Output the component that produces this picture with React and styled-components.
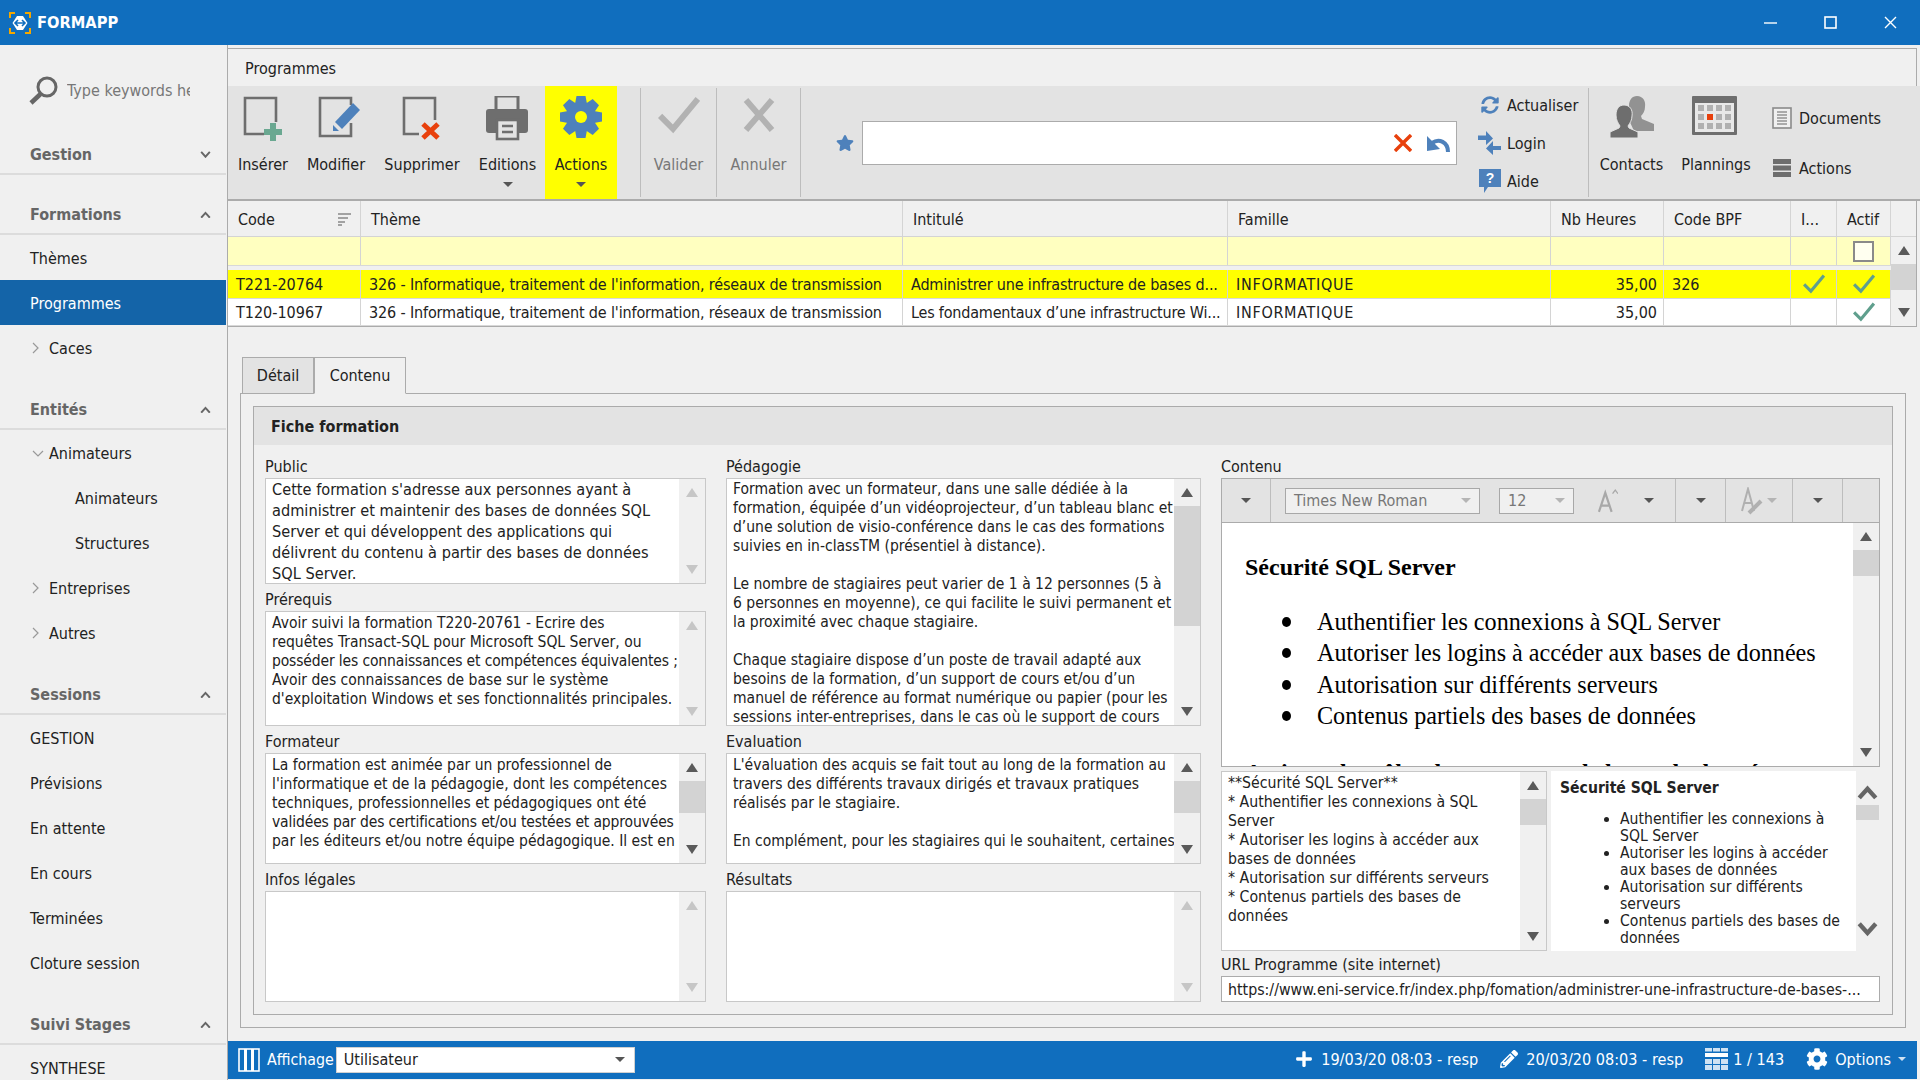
import styled, { createGlobalStyle } from 'styled-components';
import { FaStar, FaSyncAlt, FaPlus, FaPencilAlt, FaCog } from 'react-icons/fa';

const GlobalStyle = createGlobalStyle`
  html, body {
    margin: 0;
    padding: 0;
    background: #f0f0f0;
  }
  * {
    box-sizing: border-box;
  }
`;

const UI_FONT = `"DejaVu Sans Condensed", "DejaVu Sans", sans-serif`;
const BLUE = '#106ebe';
const ICON_BLUE = '#4e81bb';
const ICON_GRAY = '#6e6e6e';
const ICON_RED = '#e8400c';
const ICON_GREEN = '#6aa891';
const LINE = '#ababab';

const Window = styled.div`
  width: 1920px;
  height: 1080px;
  overflow: hidden;
  display: flex;
  flex-direction: column;
  background: #f0f0f0;
  color: #222;
  font-family: ${UI_FONT};
  font-stretch: condensed;
  font-size: 16px;
`;

const TitleBar = styled.header`
  height: 45px;
  flex: none;
  display: flex;
  align-items: center;
  padding-left: 9px;
  background: ${BLUE};
  color: #fff;
`;

const AppName = styled.span`
  margin-left: 6px;
  font-weight: 700;
  font-size: 16.3px;
`;

const WinButtons = styled.div`
  margin-left: auto;
  display: flex;
`;

const WinButton = styled.div`
  width: 60px;
  height: 45px;
  display: flex;
  align-items: center;
  justify-content: center;
`;

const Body = styled.div`
  flex: 1;
  min-height: 0;
  display: flex;
`;

/* sidebar */
const Sidebar = styled.nav`
  width: 228px;
  flex: none;
  border-right: 1px solid ${LINE};
  overflow: hidden;
`;

const SearchRow = styled.div`
  height: 90px;
  display: flex;
  align-items: center;
  padding-left: 29px;
  color: #777;
`;

const SearchText = styled.span`
  width: 123px;
  margin-left: 9px;
  overflow: hidden;
  white-space: nowrap;
`;

const SectionHeader = styled.div`
  height: 40px;
  display: flex;
  align-items: center;
  justify-content: space-between;
  padding: 1px 15px 0 30px;
  margin-right: 1px;
  border-bottom: 2px solid #dcdcdc;
  font-weight: 700;
  color: #666;
`;

const SectionGap = styled.div`
  height: 20px;
`;

const NavItem = styled.div`
  height: 45px;
  display: flex;
  align-items: center;
  margin-right: 1px;
  padding-top: 1px;
  padding-left: ${(p) => p.$indent || 30}px;
  background: ${(p) => (p.$active ? '#1464a8' : 'transparent')};
  color: ${(p) => (p.$active ? '#fff' : '#222')};
`;

const TreeMark = styled.span`
  width: 17px;
  margin-left: 2px;
  display: flex;
  align-items: center;
`;

/* main */
const Main = styled.main`
  flex: 1;
  min-width: 0;
  display: flex;
  flex-direction: column;
  padding-top: 3px;
`;

const PanelTitle = styled.div`
  height: 38px;
  flex: none;
  display: flex;
  align-items: center;
  margin-right: 3px;
  padding: 1px 0 0 17px;
  border-top: 1px solid ${LINE};
  border-right: 1px solid ${LINE};
`;

const Toolbar = styled.div`
  height: 115px;
  flex: none;
  display: flex;
  background: #e3e3e3;
  border-bottom: 2px solid ${LINE};
`;

const ToolButton = styled.div`
  width: ${(p) => p.$w}px;
  flex: none;
  display: flex;
  flex-direction: column;
  align-items: center;
  padding-top: 10px;
  background: ${(p) => (p.$active ? '#ffff00' : 'transparent')};
  color: ${(p) => (p.$disabled ? '#777' : '#222')};
`;

const ToolIcon = styled.div`
  height: 46px;
  width: 100%;
  display: flex;
  align-items: flex-start;
  justify-content: center;
  padding-left: ${(p) => (p.$shift > 0 ? p.$shift : 0)}px;
  padding-right: ${(p) => (p.$shift < 0 ? -p.$shift : 0)}px;
`;

const ToolLabel = styled.div`
  margin-top: 12px;
  line-height: 22px;
  white-space: nowrap;
`;

const Caret = styled.span`
  display: block;
  width: 0;
  height: 0;
  border-left: ${(p) => p.$size || 5}px solid transparent;
  border-right: ${(p) => p.$size || 5}px solid transparent;
  border-top: ${(p) => p.$size || 5}px solid ${(p) => p.$color || '#555'};
`;

const ToolCaret = styled(Caret)`
  margin-top: 6px;
`;

const ToolSep = styled.div`
  width: 1px;
  flex: none;
  margin: 2px 0 2px ${(p) => p.$left || 0}px;
  background: #bdbdbd;
`;

const FilterGroup = styled.div`
  display: flex;
  align-items: center;
  margin-left: 35px;
  height: 100%;
`;

const FilterInput = styled.div`
  width: 595px;
  height: 44px;
  margin-left: 8px;
  display: flex;
  align-items: center;
  justify-content: flex-end;
  padding-right: 6px;
  gap: 14px;
  background: #fff;
  border: 1px solid ${LINE};
`;

const LinkColumn = styled.div`
  width: ${(p) => p.$w}px;
  flex: none;
  margin-left: ${(p) => p.$left || 0}px;
  display: flex;
  flex-direction: column;
  gap: ${(p) => p.$gap}px;
  padding-top: ${(p) => p.$top}px;
`;

const LinkRow = styled.div`
  height: 22px;
  display: flex;
  align-items: center;
  gap: 8px;
  white-space: nowrap;
`;

const LinkIcon = styled.span`
  width: 19px;
  display: flex;
  justify-content: center;
  color: ${ICON_BLUE};

  svg {
    flex: none;
  }
`;

/* table */
const Table = styled.section`
  flex: none;
  margin-right: 3px;
  border-bottom: 1px solid ${LINE};
  display: flex;
  border-right: 1px solid ${LINE};
`;

const TableMain = styled.div`
  width: 1663px;
  flex: none;
`;

const HeadRow = styled.div`
  display: flex;
  height: 36px;
  border-bottom: 1px solid #d4d4d4;
`;

const HeadCell = styled.div`
  width: ${(p) => p.$w}px;
  flex: none;
  display: flex;
  align-items: center;
  justify-content: space-between;
  padding: 1px 9px 0 10px;
  border-right: 1px solid #d4d4d4;
  white-space: nowrap;
  overflow: hidden;
`;

const DataRow = styled.div`
  display: flex;
  height: ${(p) => p.$h}px;
  background: ${(p) => p.$bg};
  border-bottom: 1px solid #d8d8d8;
  margin-bottom: ${(p) => p.$gap || 0}px;
`;

const Cell = styled.div`
  width: ${(p) => p.$w}px;
  flex: none;
  display: flex;
  align-items: center;
  justify-content: ${(p) => (p.$center ? 'center' : p.$right ? 'flex-end' : 'flex-start')};
  padding: ${(p) => (p.$right ? '1px 6px 0 0' : p.$center ? '0' : '1px 0 0 8px')};
  border-right: 1px solid #d4d4d4;
  letter-spacing: ${(p) => p.$track || 0}px;
  white-space: nowrap;
  overflow: hidden;
`;

const CheckBox = styled.span`
  width: 21px;
  height: 21px;
  background: #fffff0;
  border: 2px solid #8a8a8a;
`;

const HeadCorner = styled.div`
  height: 36px;
  border-bottom: 1px solid #d4d4d4;
`;

const Scroll = styled.div`
  width: ${(p) => p.$w || 26}px;
  flex: none;
  display: flex;
  flex-direction: column;
  align-items: stretch;
  background: #f0f0f0;
`;

const ScrollEnd = styled.div`
  height: 27px;
  flex: none;
  display: flex;
  align-items: center;
  justify-content: center;
`;

const ScrollThumb = styled.div`
  height: ${(p) => p.$h}px;
  flex: none;
  background: #d3d3d3;
`;

const ScrollFill = styled.div`
  flex: 1;
`;

const ArrowUp = styled.span`
  width: 0;
  height: 0;
  border-left: 6px solid transparent;
  border-right: 6px solid transparent;
  border-bottom: 9px solid ${(p) => (p.$off ? '#c6c6c6' : '#5a5a5a')};
`;

const ArrowDown = styled(ArrowUp)`
  border-bottom: 0;
  border-top: 9px solid ${(p) => (p.$off ? '#c6c6c6' : '#5a5a5a')};
`;

/* tabs */
const Content = styled.div`
  flex: none;
  margin: 30px 14px 0 12px;
`;

const Tabs = styled.div`
  display: flex;
  height: 36px;
  padding-left: 2px;
`;

const Tab = styled.div`
  width: ${(p) => p.$w}px;
  display: flex;
  align-items: center;
  justify-content: center;
  background: ${(p) => (p.$active ? '#f0f0f0' : '#e3e3e3')};
  border: 1px solid ${LINE};
  border-bottom: ${(p) => (p.$active ? '1px solid #f0f0f0' : `1px solid ${LINE}`)};
  margin-bottom: -1px;
  position: relative;
  z-index: 1;
`;

const TabPane = styled.div`
  height: 635px;
  padding: 12px;
  border: 1px solid ${LINE};
`;

const Group = styled.div`
  height: 609px;
  border: 1px solid ${LINE};
`;

const GroupHead = styled.div`
  height: 38px;
  display: flex;
  align-items: center;
  padding-left: 17px;
  background: #e3e3e3;
  font-weight: 700;
`;

const GroupBody = styled.div`
  display: grid;
  grid-template-columns: 441px 475px 659px;
  column-gap: 20px;
  padding: 13px 11px 0 11px;
`;

const FieldColumn = styled.div`
  display: flex;
  flex-direction: column;
  gap: 7px;
`;

const Field = styled.div`
  display: flex;
  flex-direction: column;
`;

const FieldLabel = styled.label`
  height: 20px;
  line-height: 18px;
  flex: none;
  white-space: nowrap;
`;

const TextBox = styled.div`
  height: ${(p) => p.$h}px;
  display: flex;
  background: #fff;
  border: 1px solid #c8c8c8;
  overflow: hidden;
`;

const TextArea = styled.div`
  flex: 1;
  min-width: 0;
  padding: ${(p) => p.$pad ?? 1}px 0 0 6px;
  font-size: ${(p) => p.$size || 15.5}px;
  line-height: ${(p) => p.$line || 19}px;
  white-space: pre;
  overflow: hidden;
`;

const TightLine = styled.span`
  letter-spacing: -0.14px;
`;

const Editor = styled.div`
  height: 289px;
  display: flex;
  flex-direction: column;
  border: 1px solid ${LINE};
  background: #fff;
`;

const EditorBar = styled.div`
  height: 44px;
  flex: none;
  display: flex;
  align-items: center;
  background: #e3e3e3;
  border-bottom: 1px solid ${LINE};
`;

const BarSlot = styled.div`
  width: ${(p) => p.$w}px;
  height: 100%;
  flex: none;
  display: flex;
  align-items: center;
  justify-content: ${(p) => p.$justify || 'center'};
  gap: ${(p) => p.$gap || 0}px;
  border-right: 1px solid #bdbdbd;
  padding-left: ${(p) => p.$pad || 0}px;
`;

const BarSelect = styled.div`
  width: ${(p) => p.$w}px;
  height: 26px;
  margin-left: ${(p) => p.$left || 0}px;
  flex: none;
  display: flex;
  align-items: center;
  justify-content: space-between;
  padding: 0 8px;
  background: #f0f0f0;
  border: 1px solid #a8a8a8;
  color: #777;
  font-size: 16px;
`;

const EditorMain = styled.div`
  flex: 1;
  min-height: 0;
  display: flex;
`;

const RichPage = styled.div`
  flex: 1;
  min-width: 0;
  overflow: hidden;
  padding: 27px 0 0 23px;
  font-family: "Liberation Serif", serif;
  font-stretch: normal;
  color: #000;
`;

const RichTitle = styled.div`
  font-weight: 700;
  font-size: 24px;
  line-height: 34px;
  white-space: nowrap;
`;

const RichList = styled.ul`
  margin: 22px 0 24px;
  padding-left: 72px;
  list-style: none;
  font-size: 24.15px;
  line-height: 31.3px;
  white-space: nowrap;

  li {
    position: relative;
  }

  li::before {
    content: '';
    position: absolute;
    left: -35px;
    top: 11px;
    width: 9px;
    height: 10px;
    border-radius: 50%;
    background: #000;
  }
`;

const Lower = styled.div`
  display: flex;
  height: 180px;
  margin-top: 4px;
`;

const SourceBox = styled(TextBox)`
  width: 326px;
  flex: none;
`;

const Preview = styled.div`
  width: 305px;
  flex: none;
  margin-left: 4px;
  background: #fff;
  padding: 7px 0 0 9px;
  font-size: 15.6px;
  overflow: hidden;
`;

const PreviewTitle = styled.div`
  font-weight: 700;
  line-height: 20px;
`;

const PreviewList = styled.ul`
  margin: 13px 0 0;
  padding-left: 60px;
  line-height: 17px;
  white-space: pre;
`;

const PreviewScroll = styled.div`
  width: 23px;
  flex: none;
  display: flex;
  flex-direction: column;
  align-items: center;
  padding: 14px 0 14px;
`;

const PreviewThumb = styled.div`
  width: 100%;
  height: 15px;
  margin-top: 5px;
  background: #d3d3d3;
`;

const UrlField = styled(Field)`
  margin-top: 5px;
`;

const UrlInput = styled.div`
  height: 26px;
  display: flex;
  align-items: center;
  padding-left: 6px;
  background: #fff;
  border: 1px solid ${LINE};
  font-size: 15.8px;
  white-space: nowrap;
  overflow: hidden;
`;

const StatusBar = styled.footer`
  height: 38px;
  flex: none;
  margin: 13px 3px 0 0;
  display: flex;
  align-items: center;
  padding: 0 11px 0 10px;
  background: ${BLUE};
  color: #fff;
`;

const StatusLabel = styled.span`
  margin: 0 2px 0 7px;
  font-size: 15.8px;
  padding-bottom: 2px;
`;

const StatusSelect = styled.div`
  width: 299px;
  height: 26px;
  display: flex;
  align-items: center;
  justify-content: space-between;
  padding: 0 9px 1px 7px;
  background: #fff;
  border: 1px solid #d0d0d0;
  color: #222;
`;

const StatusRight = styled.div`
  margin-left: auto;
  display: flex;
  align-items: center;
  gap: 22px;
  font-size: 16.1px;
`;

const StatusItem = styled.span`
  display: flex;
  align-items: center;
  gap: ${(p) => p.$gap || 8}px;
  padding-bottom: 2px;
  white-space: nowrap;
`;

const Chevron = ({ up, size = 11, color = '#666', width = 2 }) => (
  <svg width={size} height={size * 0.7} viewBox="0 0 11 8" fill="none" stroke={color} strokeWidth={width}>
    <path d={up ? 'M1 7 L5.5 2 L10 7' : 'M1 1 L5.5 6 L10 1'} />
  </svg>
);

const TreeRight = () => (
  <svg width="7" height="12" viewBox="0 0 7 12" fill="none" stroke="#999" strokeWidth="1.2">
    <path d="M1 1 L6 6 L1 11" />
  </svg>
);

const TreeDown = () => (
  <svg width="12" height="7" viewBox="0 0 12 7" fill="none" stroke="#999" strokeWidth="1.2">
    <path d="M1 1 L6 6 L11 1" />
  </svg>
);

const Logo = () => (
  <svg width="22" height="22" viewBox="0 0 22 22" fill="none">
    <path d="M1 6 V1 H6 M16 1 H21 V6 M21 16 V21 H16 M6 21 H1 V16" stroke="#f5a800" strokeWidth="2" />
    <path d="M8 4 H14 L18.5 11 L14 18 H8 L3.5 11 Z" fill="#fff" />
    <path d="M6.5 11 H15.5 M9 8 L6 11 L9 14 M13 8 L16 11 L13 14" stroke={BLUE} strokeWidth="1.6" />
  </svg>
);

const Magnifier = () => (
  <svg width="29" height="29" viewBox="0 0 29 29" fill="none" stroke="#666">
    <circle cx="18" cy="11" r="9" strokeWidth="3" />
    <path d="M11.5 18 L2 27" strokeWidth="4.5" />
  </svg>
);

const DocFrame = ({ children, w = 40, h = 46, gapPath }) => (
  <svg width={w} height={h} viewBox={`0 0 ${w} ${h}`} fill="none">
    <path d={gapPath} stroke={ICON_GRAY} strokeWidth="2.6" />
    {children}
  </svg>
);

const InsertIcon = () => (
  <DocFrame gapPath="M21 38 H2 V2 H33 V26">
    <path d="M27 27 H33 V33 H39 V39 H33 V45 H27 V39 H21 V33 H27 Z" fill={ICON_GREEN} />
  </DocFrame>
);

const EditIcon = () => (
  <DocFrame w={44} gapPath="M33 9 V2 H2 V40 H33 V27">
    <path d="M35 7 L42 14 L24 33 L17 26 Z" fill={ICON_BLUE} />
    <path d="M15 29 L21 35 H15 Z" fill={ICON_BLUE} />
  </DocFrame>
);

const DeleteIcon = () => (
  <DocFrame gapPath="M17 38 H2 V2 H33 V24">
    <path d="M21 28 L36 42 M36 28 L21 42" stroke={ICON_RED} strokeWidth="5" />
  </DocFrame>
);

const PrinterIcon = () => (
  <svg width="42" height="46" viewBox="0 0 42 46" fill="none">
    <path d="M10 15 V0 H32 V15" stroke={ICON_GRAY} strokeWidth="3" />
    <path d="M3 13 H39 Q42 13 42 16 V34 Q42 37 39 37 H3 Q0 37 0 34 V16 Q0 13 3 13 Z" fill={ICON_GRAY} />
    <rect x="11" y="24" width="21" height="19" fill="#e3e3e3" stroke={ICON_GRAY} strokeWidth="2.6" />
    <path d="M16 30 H27 M16 36 H27" stroke={ICON_GRAY} strokeWidth="2.4" />
  </svg>
);

const GearIcon = ({ hole = '#ffff00', color = ICON_BLUE, size = 42 }) => (
  <svg width={size} height={size} viewBox="0 0 42 42">
    {[0, 45, 90, 135, 180, 225, 270, 315].map((a) => (
      <path key={a} d="M16.5 0 H25.5 L27 8 H15 Z" fill={color} transform={`rotate(${a} 21 21)`} />
    ))}
    <circle cx="21" cy="21" r="15" fill={color} />
    <circle cx="21" cy="21" r="6" fill={hole} />
  </svg>
);

const CheckIcon = ({ color = '#b2b2b2', size = 42, width = 6 }) => (
  <svg width={size} height={size * 0.9} viewBox="0 0 42 38" fill="none">
    <path d="M2 20 L15 33 L40 3" stroke={color} strokeWidth={width} />
  </svg>
);

const CrossIcon = () => (
  <svg width="32" height="38" viewBox="0 0 32 38" fill="none">
    <path d="M3 4 L29 34 M29 4 L3 34" stroke="#b2b2b2" strokeWidth="6" />
  </svg>
);

const UndoIcon = () => (
  <svg width="24" height="20" viewBox="0 0 24 20" fill="none">
    <path d="M22 19 C22 9 13 5 6 10" stroke={ICON_BLUE} strokeWidth="4" />
    <path d="M1 3 L1 18 L14 16 Z" fill={ICON_BLUE} />
  </svg>
);

const SwapIcon = () => (
  <svg width="23" height="24" viewBox="0 0 23 24">
    <path d="M0 4.5 H8 V0 L15 7.5 L8 14 V9 H0 Z M23 15 H15 V10 L8 17.5 L15 24 V19 H23 Z" fill={ICON_BLUE} />
  </svg>
);

const HelpIcon = () => (
  <svg width="22" height="24" viewBox="0 0 22 24">
    <path d="M0 0 H22 V18 H9 L5 24 V18 H0 Z" fill={ICON_BLUE} />
    <text x="11" y="14" textAnchor="middle" fontSize="14" fontWeight="700" fontFamily="Liberation Sans" fill="#fff">?</text>
  </svg>
);

const ContactsIcon = () => (
  <svg width="44" height="42" viewBox="0 0 44 42">
    <path d="M27 0 C33 0 36 5 35 11 C35 15 33 18 31 20 L32 23 L44 28 V35 H24 L19 24 L22 22 C20 18 19 15 19 10 C19 4 22 0 27 0 Z" fill="#929292" />
    <path d="M14 9 C20 9 23 14 22 20 C22 24 20 27 18 30 L19 32 L28 36 V42 H0 V36 L9 32 L10 30 C8 27 6 24 6 19 C6 13 9 9 14 9 Z" fill="#6e6e6e" stroke="#e3e3e3" strokeWidth="1" />
  </svg>
);

const PlanningIcon = () => (
  <svg width="45" height="39" viewBox="0 0 45 39">
    <rect width="45" height="39" rx="1" fill={ICON_GRAY} />
    <rect x="3" y="7" width="39" height="29" fill="#e8e8e8" />
    {[0, 1, 2].map((r) => [0, 1, 2, 3].map((c) => (
      <rect key={`${r}-${c}`} x={6 + c * 9} y={9 + r * 9} width="6" height="6" fill={r === 1 && c === 1 ? ICON_RED : '#b0b0b0'} />
    )))}
  </svg>
);

const DocumentIcon = () => (
  <svg width="20" height="22" viewBox="0 0 20 22" fill="none">
    <rect x="1" y="1" width="18" height="20" fill="#f0f0f0" stroke="#8a8a8a" strokeWidth="1.6" />
    <path d="M5 5 H15 M5 8 H15 M5 11 H15 M5 14 H15 M5 17 H15" stroke="#666" strokeWidth="1" />
  </svg>
);

const ServerIcon = () => (
  <svg width="18" height="18" viewBox="0 0 18 18">
    <rect width="18" height="5" fill={ICON_GRAY} />
    <rect y="6.5" width="18" height="5" fill={ICON_GRAY} />
    <rect y="13" width="18" height="5" fill={ICON_GRAY} />
  </svg>
);

const SortIcon = () => (
  <svg width="13" height="13" viewBox="0 0 13 13">
    <path d="M0 1 H13 M0 5 H10 M0 9 H7 M0 12 H4" stroke="#888" strokeWidth="1.6" />
  </svg>
);

const ColumnsIcon = () => (
  <svg width="22" height="24" viewBox="0 0 22 24" fill="none" stroke="#fff">
    <rect x="1" y="1" width="20" height="22" strokeWidth="1.6" />
    <path d="M7.5 1 V23 M14.5 1 V23" strokeWidth="3" />
  </svg>
);

const GridIcon = () => (
  <svg width="23" height="23" viewBox="0 0 23 23">
    <rect width="23" height="4" y="5" fill="#fff" />
    {[0, 1, 2].map((c) => (
      <rect key={`t${c}`} x={c * 8} y="0" width="7" height="3.5" fill="#cfe2f3" />
    ))}
    {[0, 1].map((r) => [0, 1, 2].map((c) => (
      <rect key={`${r}-${c}`} x={c * 8} y={11 + r * 6} width="7" height="5" fill="#cfe2f3" />
    )))}
  </svg>
);

const FontSizeIcon = () => (
  <svg width="20" height="26" viewBox="0 0 22 26" fill="none" stroke="#a8a8a8">
    <path d="M1 25 L8 4 L15 25 M4 18 H12" strokeWidth="2.4" />
    <path d="M16 5 L19 1 L22 5" strokeWidth="1.4" />
  </svg>
);

const FontColorIcon = () => (
  <svg width="22" height="28" viewBox="0 0 22 28" fill="none" stroke="#b0b0b0">
    <path d="M1 24 L7 2 L13 24 M4 16 H10" strokeWidth="2" />
    <path d="M8 26 L20 14" strokeWidth="4" />
  </svg>
);

const ScrollBar = ({ thumb, off }) => (
  <Scroll>
    <ScrollEnd><ArrowUp $off={off} /></ScrollEnd>
    {thumb ? <ScrollThumb $h={thumb} /> : null}
    <ScrollFill />
    <ScrollEnd><ArrowDown $off={off} /></ScrollEnd>
  </Scroll>
);

const COLS = [133, 542, 325, 323, 113, 127, 46, 54];
const HEADS = ['Code', 'Thème', 'Intitulé', 'Famille', 'Nb Heures', 'Code BPF', 'I...', 'Actif'];

const Check = ({ color = '#5f9f8d' }) => <CheckIcon color={color} size={22} width={6} />;

const SIDE = [
  { type: 'search' },
  { type: 'section', label: 'Gestion', open: false },
  { type: 'section', label: 'Formations', open: true },
  { label: 'Thèmes' },
  { label: 'Programmes', active: true },
  { label: 'Caces', tree: 'right' },
  { type: 'section', label: 'Entités', open: true },
  { label: 'Animateurs', tree: 'down' },
  { label: 'Animateurs', indent: 75 },
  { label: 'Structures', indent: 75 },
  { label: 'Entreprises', tree: 'right' },
  { label: 'Autres', tree: 'right' },
  { type: 'section', label: 'Sessions', open: true },
  { label: 'GESTION' },
  { label: 'Prévisions' },
  { label: 'En attente' },
  { label: 'En cours' },
  { label: 'Terminées' },
  { label: 'Cloture session' },
  { type: 'section', label: 'Suivi Stages', open: true },
  { label: 'SYNTHESE' },
];

const PUBLIC_TEXT = `Cette formation s'adresse aux personnes ayant à
administrer et maintenir des bases de données SQL
Server et qui développent des applications qui
délivrent du contenu à partir des bases de données
SQL Server.`;

const PEDAGOGY_TEXT = `Formation avec un formateur, dans une salle dédiée à la
formation, équipée d’un vidéoprojecteur, d’un tableau blanc et
d’une solution de visio-conférence dans le cas des formations
suivies en in-classTM (présentiel à distance).

Le nombre de stagiaires peut varier de 1 à 12 personnes (5 à
6 personnes en moyenne), ce qui facilite le suivi permanent et
la proximité avec chaque stagiaire.

Chaque stagiaire dispose d’un poste de travail adapté aux
besoins de la formation, d’un support de cours et/ou d’un
manuel de référence au format numérique ou papier (pour les
sessions inter-entreprises, dans le cas où le support de cours`;

const EVAL_TEXT = `L'évaluation des acquis se fait tout au long de la formation au
travers des différents travaux dirigés et travaux pratiques
réalisés par le stagiaire.

En complément, pour les stagiaires qui le souhaitent, certaines`;

const SOURCE_TEXT = `**Sécurité SQL Server**
* Authentifier les connexions à SQL
Server
* Autoriser les logins à accéder aux
bases de données
* Autorisation sur différents serveurs
* Contenus partiels des bases de
données`;

const App = () => {
  return (
    <Window>
      <GlobalStyle />
      <TitleBar>
        <Logo />
        <AppName>FORMAPP</AppName>
        <WinButtons>
          <WinButton>
            <svg width="13" height="13" viewBox="0 0 13 13" stroke="#fff" strokeWidth="1.4"><path d="M0 7 H13" /></svg>
          </WinButton>
          <WinButton>
            <svg width="13" height="13" viewBox="0 0 13 13" fill="none" stroke="#fff" strokeWidth="1.6"><rect x="1" y="1" width="11" height="11" /></svg>
          </WinButton>
          <WinButton>
            <svg width="13" height="13" viewBox="0 0 13 13" stroke="#fff" strokeWidth="1.4"><path d="M1 1 L12 12 M12 1 L1 12" /></svg>
          </WinButton>
        </WinButtons>
      </TitleBar>
      <Body>
        <Sidebar>
          {SIDE.map((item, i) => {
            if (item.type === 'search') {
              return (
                <SearchRow key={i}>
                  <Magnifier />
                  <SearchText>Type keywords here</SearchText>
                </SearchRow>
              );
            }
            if (item.type === 'section') {
              return (
                <div key={i}>
                  {i > 1 ? <SectionGap /> : null}
                  <SectionHeader>
                    {item.label}
                    <Chevron up={item.open} />
                  </SectionHeader>
                </div>
              );
            }
            return (
              <NavItem key={i} $active={item.active} $indent={item.indent}>
                {item.tree ? (
                  <TreeMark>{item.tree === 'right' ? <TreeRight /> : <TreeDown />}</TreeMark>
                ) : null}
                {item.label}
              </NavItem>
            );
          })}
        </Sidebar>
        <Main>
          <PanelTitle>Programmes</PanelTitle>
          <Toolbar>
            <ToolButton $w={70}>
              <ToolIcon><InsertIcon /></ToolIcon>
              <ToolLabel>Insérer</ToolLabel>
            </ToolButton>
            <ToolButton $w={76}>
              <ToolIcon $shift={7}><EditIcon /></ToolIcon>
              <ToolLabel>Modifier</ToolLabel>
            </ToolButton>
            <ToolButton $w={96}>
              <ToolIcon><DeleteIcon /></ToolIcon>
              <ToolLabel>Supprimer</ToolLabel>
            </ToolButton>
            <ToolButton $w={75}>
              <ToolIcon $shift={-2}><PrinterIcon /></ToolIcon>
              <ToolLabel>Editions</ToolLabel>
              <ToolCaret />
            </ToolButton>
            <ToolButton $w={72} $active>
              <ToolIcon><GearIcon /></ToolIcon>
              <ToolLabel>Actions</ToolLabel>
              <ToolCaret />
            </ToolButton>
            <ToolSep $left={23} />
            <ToolButton $w={75} $disabled>
              <ToolIcon><CheckIcon /></ToolIcon>
              <ToolLabel>Valider</ToolLabel>
            </ToolButton>
            <ToolSep />
            <ToolButton $w={83} $disabled>
              <ToolIcon><CrossIcon /></ToolIcon>
              <ToolLabel>Annuler</ToolLabel>
            </ToolButton>
            <ToolSep />
            <FilterGroup>
              <FaStar size={18} color={ICON_BLUE} />
              <FilterInput>
                <svg width="18" height="18" viewBox="0 0 18 18" stroke={ICON_RED} strokeWidth="3.4"><path d="M1 1 L17 17 M17 1 L1 17" /></svg>
                <UndoIcon />
              </FilterInput>
            </FilterGroup>
            <LinkColumn $w={108} $left={23} $gap={16} $top={8}>
              <LinkRow><LinkIcon><FaSyncAlt size={18} /></LinkIcon>Actualiser</LinkRow>
              <LinkRow><LinkIcon><SwapIcon /></LinkIcon>Login</LinkRow>
              <LinkRow><LinkIcon><HelpIcon /></LinkIcon>Aide</LinkRow>
            </LinkColumn>
            <ToolSep />
            <ToolButton $w={85}>
              <ToolIcon><ContactsIcon /></ToolIcon>
              <ToolLabel>Contacts</ToolLabel>
            </ToolButton>
            <ToolButton $w={84}>
              <ToolIcon $shift={-4}><PlanningIcon /></ToolIcon>
              <ToolLabel>Plannings</ToolLabel>
            </ToolButton>
            <LinkColumn $w={150} $left={14} $gap={28} $top={21}>
              <LinkRow><LinkIcon><DocumentIcon /></LinkIcon>Documents</LinkRow>
              <LinkRow><LinkIcon><ServerIcon /></LinkIcon>Actions</LinkRow>
            </LinkColumn>
          </Toolbar>
          <Table>
            <TableMain>
              <HeadRow>
                {HEADS.map((h, i) => (
                  <HeadCell key={h} $w={COLS[i]}>
                    {h}
                    {i === 0 ? <SortIcon /> : null}
                  </HeadCell>
                ))}
              </HeadRow>
              <DataRow $h={29} $bg="#ffffc0" $gap={4}>
                {COLS.map((w, i) => (
                  <Cell key={i} $w={w} $center={i === 7}>
                    {i === 7 ? <CheckBox /> : null}
                  </Cell>
                ))}
              </DataRow>
              <DataRow $h={29} $bg="#ffff00">
                <Cell $w={COLS[0]}>T221-20764</Cell>
                <Cell $w={COLS[1]} $track={-0.15}>326 - Informatique, traitement de l'information, réseaux de transmission</Cell>
                <Cell $w={COLS[2]} $track={-0.17}>Administrer une infrastructure de bases d...</Cell>
                <Cell $w={COLS[3]} $track={0.7}>INFORMATIQUE</Cell>
                <Cell $w={COLS[4]} $right>35,00</Cell>
                <Cell $w={COLS[5]}>326</Cell>
                <Cell $w={COLS[6]} $center><Check /></Cell>
                <Cell $w={COLS[7]} $center><Check /></Cell>
              </DataRow>
              <DataRow $h={27} $bg="#fff">
                <Cell $w={COLS[0]}>T120-10967</Cell>
                <Cell $w={COLS[1]} $track={-0.15}>326 - Informatique, traitement de l'information, réseaux de transmission</Cell>
                <Cell $w={COLS[2]} $track={-0.2}>Les fondamentaux d’une infrastructure Wi...</Cell>
                <Cell $w={COLS[3]} $track={0.7}>INFORMATIQUE</Cell>
                <Cell $w={COLS[4]} $right>35,00</Cell>
                <Cell $w={COLS[5]} />
                <Cell $w={COLS[6]} />
                <Cell $w={COLS[7]} $center><Check /></Cell>
              </DataRow>
            </TableMain>
            <Scroll $w={25}>
              <HeadCorner />
              <ScrollEnd><ArrowUp /></ScrollEnd>
              <ScrollThumb $h={26} />
              <ScrollFill />
              <ScrollEnd><ArrowDown /></ScrollEnd>
            </Scroll>
          </Table>
          <Content>
            <Tabs>
              <Tab $w={72}>Détail</Tab>
              <Tab $w={92} $active>Contenu</Tab>
            </Tabs>
            <TabPane>
              <Group>
                <GroupHead>Fiche formation</GroupHead>
                <GroupBody>
                  <FieldColumn>
                    <Field>
                      <FieldLabel>Public</FieldLabel>
                      <TextBox $h={106}>
                        <TextArea $size={16.2} $line={21} $pad={0}>{PUBLIC_TEXT}</TextArea>
                        <ScrollBar off />
                      </TextBox>
                    </Field>
                    <Field>
                      <FieldLabel>Prérequis</FieldLabel>
                      <TextBox $h={115}>
                        <TextArea $pad={2}>
                          {"Avoir suivi la formation T220-20761 - Ecrire des\nrequêtes Transact-SQL pour Microsoft SQL Server, ou\n"}
                          <TightLine>posséder les connaissances et compétences équivalentes ;</TightLine>
                          {"\nAvoir des connaissances de base sur le système\nd'exploitation Windows et ses fonctionnalités principales."}
                        </TextArea>
                        <ScrollBar off />
                      </TextBox>
                    </Field>
                    <Field>
                      <FieldLabel>Formateur</FieldLabel>
                      <TextBox $h={111}>
                        <TextArea $pad={2}>
                          {"La formation est animée par un professionnel de\nl'informatique et de la pédagogie, dont les compétences\ntechniques, professionnelles et pédagogiques ont été\n"}
                          <TightLine>validées par des certifications et/ou testées et approuvées</TightLine>
                          {"\npar les éditeurs et/ou notre équipe pédagogique. Il est en"}
                        </TextArea>
                        <ScrollBar thumb={32} />
                      </TextBox>
                    </Field>
                    <Field>
                      <FieldLabel>Infos légales</FieldLabel>
                      <TextBox $h={111}>
                        <TextArea />
                        <ScrollBar off />
                      </TextBox>
                    </Field>
                  </FieldColumn>
                  <FieldColumn>
                    <Field>
                      <FieldLabel>Pédagogie</FieldLabel>
                      <TextBox $h={248}>
                        <TextArea>{PEDAGOGY_TEXT}</TextArea>
                        <ScrollBar thumb={120} />
                      </TextBox>
                    </Field>
                    <Field>
                      <FieldLabel>Evaluation</FieldLabel>
                      <TextBox $h={111}>
                        <TextArea $pad={2}>{EVAL_TEXT}</TextArea>
                        <ScrollBar thumb={32} />
                      </TextBox>
                    </Field>
                    <Field>
                      <FieldLabel>Résultats</FieldLabel>
                      <TextBox $h={111}>
                        <TextArea />
                        <ScrollBar off />
                      </TextBox>
                    </Field>
                  </FieldColumn>
                  <Field>
                    <FieldLabel>Contenu</FieldLabel>
                    <Editor>
                      <EditorBar>
                        <BarSlot $w={49}><Caret /></BarSlot>
                        <BarSelect $w={195} $left={14}>Times New Roman<Caret $color="#b5b5b5" /></BarSelect>
                        <BarSelect $w={75} $left={19}>12<Caret $color="#b5b5b5" /></BarSelect>
                        <BarSlot $w={102} $justify="flex-start" $pad={24} $gap={26}><FontSizeIcon /><Caret /></BarSlot>
                        <BarSlot $w={50}><Caret /></BarSlot>
                        <BarSlot $w={67} $gap={4}><FontColorIcon /><Caret $color="#b5b5b5" /></BarSlot>
                        <BarSlot $w={50}><Caret /></BarSlot>
                      </EditorBar>
                      <EditorMain>
                        <RichPage>
                          <RichTitle>Sécurité SQL Server</RichTitle>
                          <RichList>
                            <li>Authentifier les connexions à SQL Server</li>
                            <li>Autoriser les logins à accéder aux bases de données</li>
                            <li>Autorisation sur différents serveurs</li>
                            <li>Contenus partiels des bases de données</li>
                          </RichList>
                          <RichTitle>Assigner les rôles de serveurs et de bases de données</RichTitle>
                        </RichPage>
                        <ScrollBar thumb={26} />
                      </EditorMain>
                    </Editor>
                    <Lower>
                      <SourceBox $h={180}>
                        <TextArea $size={15.7}>{SOURCE_TEXT}</TextArea>
                        <ScrollBar thumb={26} />
                      </SourceBox>
                      <Preview>
                        <PreviewTitle>Sécurité SQL Server</PreviewTitle>
                        <PreviewList>
                          <li>{'Authentifier les connexions à\nSQL Server'}</li>
                          <li>{'Autoriser les logins à accéder\naux bases de données'}</li>
                          <li>{'Autorisation sur différents\nserveurs'}</li>
                          <li>{'Contenus partiels des bases de\ndonnées'}</li>
                        </PreviewList>
                      </Preview>
                      <PreviewScroll>
                        <Chevron up size={21} color="#666" width={2.4} />
                        <PreviewThumb />
                        <ScrollFill />
                        <Chevron size={21} color="#666" width={2.4} />
                      </PreviewScroll>
                    </Lower>
                    <UrlField>
                      <FieldLabel>URL Programme (site internet)</FieldLabel>
                      <UrlInput>https://www.eni-service.fr/index.php/fomation/administrer-une-infrastructure-de-bases-...</UrlInput>
                    </UrlField>
                  </Field>
                </GroupBody>
              </Group>
            </TabPane>
          </Content>
          <StatusBar>
            <ColumnsIcon />
            <StatusLabel>Affichage</StatusLabel>
            <StatusSelect>Utilisateur<Caret /></StatusSelect>
            <StatusRight>
              <StatusItem><FaPlus size={18} />19/03/20 08:03 - resp</StatusItem>
              <StatusItem><FaPencilAlt size={18} />20/03/20 08:03 - resp</StatusItem>
              <StatusItem $gap={5}><GridIcon />1 / 143</StatusItem>
              <StatusItem $gap={7}><FaCog size={22} />Options<Caret $color="#cfe2f3" $size={4} /></StatusItem>
            </StatusRight>
          </StatusBar>
        </Main>
      </Body>
    </Window>
  );
};

export default App;
